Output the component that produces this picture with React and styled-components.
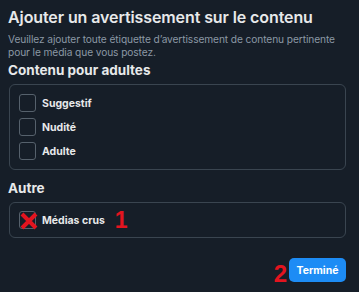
// App.jsx

import React from 'react';
import styled, { createGlobalStyle } from "styled-components";

const Global = createGlobalStyle`
    body{
        margin: 0;
        background-color: #161e28;
        font-family: Inter, "Noto Sans", sans-serif;
        color: #e7e9ea;
    }
`;

const App = () => {
    const adult = ['Suggestif', 'Nudité', 'Adulte'];

    return(
        <>
            <Global />
            <Panel>
                <Title>Ajouter un avertissement sur le contenu</Title>
                <Subtitle>
                    Veuillez ajouter toute étiquette d’avertissement de contenu pertinente pour le média que vous postez.
                </Subtitle>

                <Heading>Contenu pour adultes</Heading>
                <Group>
                    {adult.map((label) => (
                        <Row key={label}>
                            <Box />
                            <Label>{label}</Label>
                        </Row>
                    ))}
                </Group>

                <Heading $top={10}>Autre</Heading>
                <Group $single>
                    <Row>
                        <Box>
                            <Cross viewBox="0 0 20 20">
                                <path d="M3 3 L17 17 M17 3 L3 17" stroke="#e3141f" strokeWidth="4" strokeLinecap="butt" />
                            </Cross>
                        </Box>
                        <Label>Médias crus</Label>
                        <Mark>1</Mark>
                    </Row>
                </Group>

                <Footer>
                    <Mark $big>2</Mark>
                    <Done>Terminé</Done>
                </Footer>
            </Panel>
        </>
    );

};

const Panel = styled.div`
    width: 359px;
    height: 292px;
    box-sizing: border-box;
    padding: 7px 13px 0 8px;
`;

const Title = styled.h1`
    margin: 0;
    font-size: 16px;
    line-height: 20px;
    font-weight: 600;
    letter-spacing: -0.1px;
`;

const Subtitle = styled.p`
    margin: 6px 0 0;
    font-size: 10.2px;
    line-height: 13px;
    letter-spacing: -0.1px;
    color: #8b98a5;
`;

const Heading = styled.h2`
    margin: ${(p) => p.$top || 3}px 0 0;
    font-size: 13.5px;
    line-height: 17px;
    font-weight: 700;
`;

const Group = styled.div`
    margin: 5px 0 0 1px;
    border: 1px solid #3a4550;
    border-radius: 6px;
    padding: ${(p) => (p.$single ? '8px 9px' : '9px 9px')};
    display: flex;
    flex-direction: column;
    gap: 6px;
`;

const Row = styled.div`
    display: flex;
    align-items: center;
    height: 18px;
    gap: 6px;
`;

const Box = styled.div`
    position: relative;
    width: 17px;
    height: 18px;
    box-sizing: border-box;
    border: 1px solid #56616c;
    border-radius: 3px;
    flex-shrink: 0;
`;

const Cross = styled.svg`
    position: absolute;
    left: -1px;
    top: -1px;
    width: 20px;
    height: 20px;
`;

const Label = styled.span`
    font-size: 10.5px;
    font-weight: 700;
    color: #e7e9ea;
`;

const Mark = styled.span`
    font-family: "Liberation Sans", Arial, sans-serif;
    font-weight: 700;
    color: #e3141f;
    font-size: ${(p) => (p.$big ? '24px' : '23px')};
    line-height: 1;
    margin-left: ${(p) => (p.$big ? '0' : '4px')};
    margin-top: ${(p) => (p.$big ? '8px' : '0')};
`;

const Footer = styled.div`
    display: flex;
    justify-content: flex-end;
    align-items: center;
    gap: 2px;
    margin-top: 16px;
    padding-right: 0;
`;

const Done = styled.button`
    width: 57px;
    height: 24px;
    border: none;
    border-radius: 5px;
    background-color: #1d8cf5;
    color: #ffffff;
    font-family: Inter, "Noto Sans", sans-serif;
    font-size: 10.5px;
    font-weight: 700;
    padding: 0;
`;

export default App;
